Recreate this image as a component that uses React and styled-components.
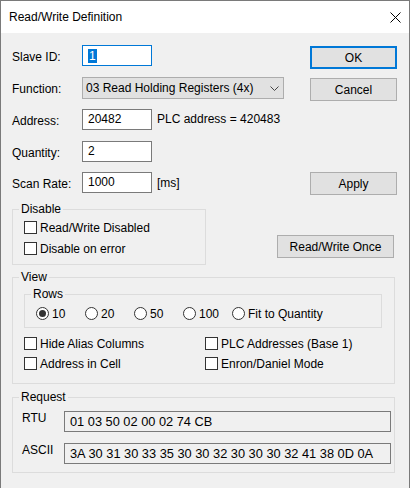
import React from 'react';
import styled, { createGlobalStyle } from 'styled-components';

const Global = createGlobalStyle`
  html, body { margin: 0; padding: 0; background: #ffffff; }
  body {
    font-family: "Liberation Sans", Arial, sans-serif;
    font-size: 12px;
    color: #000000;
  }
  * { box-sizing: border-box; }
`;

const Window = styled.div`
  width: 410px;
  height: 488px;
  border: 1px solid #7a7a7a;
  border-bottom: none;
  background: #f0f0f0;
  display: flex;
  flex-direction: column;
  overflow: hidden;
`;

const TitleBar = styled.div`
  height: 32px;
  flex: none;
  background: #ffffff;
  display: flex;
  align-items: center;
  padding: 0 8px 0 8px;
`;

const Title = styled.span`
  line-height: 15px;
`;

const CloseIcon = styled.svg`
  margin-left: auto;
  display: block;
`;

const Body = styled.div`
  flex: 1;
  padding: 12px 12px 0 11px;
  display: flex;
  flex-direction: column;
`;

const FieldRow = styled.div`
  display: flex;
  align-items: flex-start;
  height: 21px;
  margin-top: ${(p) => p.$mt || 0}px;
`;

const FieldLabel = styled.div`
  width: 70px;
  flex: none;
  line-height: 15px;
  padding-top: 5px;
  white-space: nowrap;
`;

const Edit = styled.div`
  width: 70px;
  height: 21px;
  flex: none;
  border: 1px solid ${(p) => (p.$focused ? '#0078d7' : '#7a7a7a')};
  background: #ffffff;
  padding: 0 5px;
  line-height: 19px;
  white-space: nowrap;
`;

const Selected = styled.span`
  display: inline-block;
  background: #0078d7;
  color: #ffffff;
  line-height: 14px;
  padding: 0 1px;
  vertical-align: middle;
`;

const Combo = styled.div`
  width: 202px;
  height: 22px;
  flex: none;
  border: 1px solid #adadad;
  background: #e1e1e1;
  display: flex;
  align-items: center;
  padding: 0 4px 0 3px;
  white-space: nowrap;
`;

const Chevron = styled.svg`
  margin-left: auto;
  display: block;
`;

const Note = styled.div`
  margin-left: 5px;
  line-height: 15px;
  padding-top: ${(p) => p.$pt || 3}px;
  white-space: nowrap;
`;

const Button = styled.div`
  width: ${(p) => p.$w || 87}px;
  height: 23px;
  flex: none;
  margin-left: auto;
  margin-top: ${(p) => p.$mt || 0}px;
  background: #e1e1e1;
  border: ${(p) => (p.$default ? '2px solid #0078d7' : '1px solid #adadad')};
  display: flex;
  align-items: center;
  justify-content: center;
  white-space: nowrap;
`;

const DisableRow = styled.div`
  display: flex;
  align-items: flex-end;
  margin-top: 9px;
`;

const ActionButton = styled(Button)`
  margin-right: 3px;
  margin-bottom: 7px;
`;

const Group = styled.fieldset`
  margin: ${(p) => p.$mt || 0}px ${(p) => p.$mr || 0}px 0 0;
  padding: 0;
  border: 1px solid #dcdcdc;
  min-width: 0;
  width: ${(p) => (p.$w ? `${p.$w}px` : 'auto')};
`;

const Legend = styled.legend`
  margin-left: 6px;
  padding: 0 2px;
  line-height: 15px;
  font-size: 12px;
`;

const GroupBody = styled.div`
  padding: ${(p) => p.$pad};
  display: flex;
  flex-direction: column;
  gap: ${(p) => p.$gap || 0}px;
`;

const CheckRow = styled.div`
  display: flex;
  align-items: center;
  gap: 3px;
  height: 13px;
  white-space: nowrap;
`;

const Box = styled.span`
  width: 13px;
  height: 13px;
  flex: none;
  border: 1px solid #333333;
  background: #ffffff;
`;

const RadioList = styled.div`
  display: flex;
  align-items: center;
`;

const RadioItem = styled.div`
  width: ${(p) => (p.$last ? 'auto' : '49px')};
  display: flex;
  align-items: center;
  gap: 3px;
  height: 13px;
  white-space: nowrap;
`;

const Circle = styled.span`
  width: 13px;
  height: 13px;
  flex: none;
  border-radius: 50%;
  border: 1px solid #333333;
  background: #ffffff;
  display: flex;
  align-items: center;
  justify-content: center;
  &::after {
    content: '';
    width: 7px;
    height: 7px;
    border-radius: 50%;
    background: ${(p) => (p.$on ? '#333333' : 'transparent')};
  }
`;

const OptionGrid = styled.div`
  display: grid;
  grid-template-columns: 181px 1fr;
  row-gap: 7px;
  margin-top: 9px;
`;

const DataRow = styled.div`
  display: flex;
  align-items: flex-start;
`;

const DataLabel = styled.div`
  width: 42px;
  flex: none;
  line-height: 15px;
`;

const DataBox = styled.div`
  width: 327px;
  height: 21px;
  flex: none;
  border: 1px solid #7a7a7a;
  background: #f0f0f0;
  padding: 0 5px;
  font-size: 12.8px;
  line-height: 19px;
  white-space: nowrap;
`;

const Check = ({ children }) => (
  <CheckRow>
    <Box />
    <span>{children}</span>
  </CheckRow>
);

const Radio = ({ on, last, children }) => (
  <RadioItem $last={last}>
    <Circle $on={on} />
    <span>{children}</span>
  </RadioItem>
);

export default function App() {
  return (
    <>
      <Global />
      <Window>
        <TitleBar>
          <Title>Read/Write Definition</Title>
          <CloseIcon width="11" height="11" viewBox="0 0 11 11">
            <path d="M0.5 0.5 L10.5 10.5 M10.5 0.5 L0.5 10.5" stroke="#000" strokeWidth="1" fill="none" />
          </CloseIcon>
        </TitleBar>
        <Body>
          <FieldRow>
            <FieldLabel>Slave ID:</FieldLabel>
            <Edit $focused>
              <Selected>1</Selected>
            </Edit>
            <Button $default $mt={1}>OK</Button>
          </FieldRow>
          <FieldRow $mt={11}>
            <FieldLabel>Function:</FieldLabel>
            <Combo>
              <span>03 Read Holding Registers (4x)</span>
              <Chevron width="9" height="5" viewBox="0 0 9 5">
                <polyline points="0.5,0.5 4.5,4.5 8.5,0.5" stroke="#444" strokeWidth="1" fill="none" />
              </Chevron>
            </Combo>
            <Button $mt={1}>Cancel</Button>
          </FieldRow>
          <FieldRow $mt={11}>
            <FieldLabel>Address:</FieldLabel>
            <Edit>20482</Edit>
            <Note>PLC address = 420483</Note>
          </FieldRow>
          <FieldRow $mt={11}>
            <FieldLabel>Quantity:</FieldLabel>
            <Edit>2</Edit>
          </FieldRow>
          <FieldRow $mt={10}>
            <FieldLabel>Scan Rate:</FieldLabel>
            <Edit>1000</Edit>
            <Note $pt={4}>[ms]</Note>
            <Button>Apply</Button>
          </FieldRow>

          <DisableRow>
            <Group $w={194}>
              <Legend>Disable</Legend>
              <GroupBody $pad="4px 8px 9px 11px" $gap={8}>
                <Check>Read/Write Disabled</Check>
                <Check>Disable on error</Check>
              </GroupBody>
            </Group>
            <ActionButton $w={117}>Read/Write Once</ActionButton>
          </DisableRow>

          <Group $mt={5} $mr={2}>
            <Legend>View</Legend>
            <GroupBody $pad="2px 12px 13px 11px">
              <Group>
                <Legend>Rows</Legend>
                <GroupBody $pad="5px 8px 7px 11px">
                  <RadioList>
                    <Radio on>10</Radio>
                    <Radio>20</Radio>
                    <Radio>50</Radio>
                    <Radio>100</Radio>
                    <Radio last>Fit to Quantity</Radio>
                  </RadioList>
                </GroupBody>
              </Group>
              <OptionGrid>
                <Check>Hide Alias Columns</Check>
                <Check>PLC Addresses (Base 1)</Check>
                <Check>Address in Cell</Check>
                <Check>Enron/Daniel Mode</Check>
              </OptionGrid>
            </GroupBody>
          </Group>

          <Group $mt={6} $mr={2}>
            <Legend>Request</Legend>
            <GroupBody $pad="6px 3px 8px 9px" $gap={11}>
              <DataRow>
                <DataLabel>RTU</DataLabel>
                <DataBox>01 03 50 02 00 02 74 CB</DataBox>
              </DataRow>
              <DataRow>
                <DataLabel>ASCII</DataLabel>
                <DataBox>3A 30 31 30 33 35 30 30 32 30 30 30 32 41 38 0D 0A</DataBox>
              </DataRow>
            </GroupBody>
          </Group>
        </Body>
      </Window>
    </>
  );
}
